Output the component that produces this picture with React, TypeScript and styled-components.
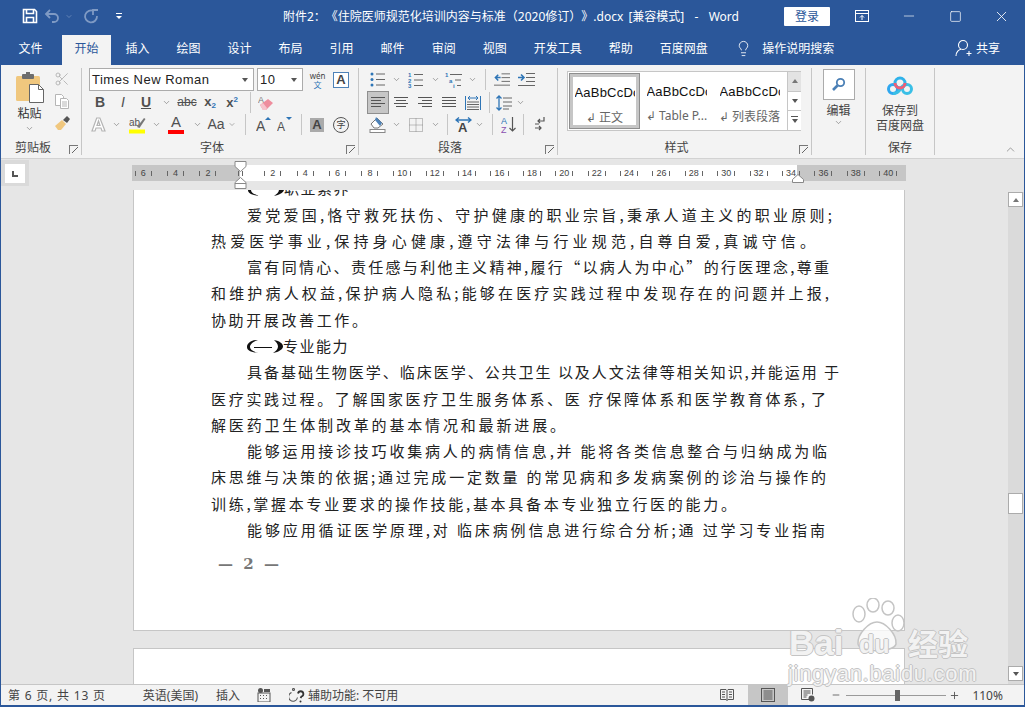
import React from "react"
import { styled, createGlobalStyle } from "styled-components"
import { Lightbulb, X, Minus, Square, ChevronDown, ChevronUp, Scissors, Plus } from "lucide-react"

const GlobalStyle = createGlobalStyle`
  html, body, #root { margin: 0; padding: 0; height: 100%; overflow: hidden; }
  body { font-family: "Noto Sans", "Noto Sans CJK SC", sans-serif; font-size: 12px; color: #444; text-spacing-trim: space-all; }
  * { box-sizing: border-box; }
`

const BLUE = "#2b579a"
const cjk = `"Noto Sans", "Noto Sans CJK SC", sans-serif`

const Window = styled.div`
  position: relative;
  height: 707px;
  width: 1025px;
  display: flex;
  flex-direction: column;
  background: ${BLUE};
  border-left: 1px solid ${BLUE};
  border-right: 1px solid ${BLUE};
  border-bottom: 2px solid ${BLUE};
  overflow: hidden;
`
const TitleBar = styled.header`
  height: 35px;
  flex: none;
  display: flex;
  align-items: center;
  padding-bottom: 3px;
  color: #fff;
  position: relative;
`
const Qat = styled.div`
  display: flex;
  align-items: center;
  padding-left: 20px;
  width: 282px;
  flex: none;
`
const QatBtn = styled.span<{ $w: number }>`
  width: ${(p) => p.$w}px;
  display: flex;
  justify-content: center;
  align-items: center;
`
const Title = styled.div`
  width: 501px;
  flex: none;
  font-size: 12px;
  color: #fff;
  white-space: pre;
  word-spacing: 2px;
`
const Login = styled.button`
  width: 46px;
  height: 19px;
  border: 0;
  background: #fff;
  color: ${BLUE};
  font: 12px ${cjk};
  padding: 0;
  margin-right: 9px;
  border-radius: 1px;
  flex: none;
`
const WinBtn = styled.span`
  width: 46.5px;
  display: flex;
  justify-content: center;
  align-items: center;
  flex: none;
`
const TabBar = styled.nav`
  height: 30px;
  flex: none;
  display: flex;
  align-items: stretch;
  padding-left: 5px;
  color: #fff;
`
const Tab = styled.span<{ $active?: boolean; $file?: boolean }>`
  padding: 0 12.5px 4px;
  margin-right: ${(p) => (p.$file ? "7px" : "2px")};
  display: flex;
  align-items: center;
  font-size: 12px;
  color: ${(p) => (p.$active ? BLUE : "#fff")};
  background: ${(p) => (p.$active ? "#f3f3f3" : "transparent")};
`
const SearchTab = styled.span`
  display: flex;
  align-items: center;
  gap: 10px;
  margin-left: 13px;
  padding-bottom: 4px;
  font-size: 12px;
`
const Share = styled.span`
  display: flex;
  align-items: center;
  gap: 2px;
  margin-left: auto;
  margin-right: 24px;
  padding-bottom: 4px;
  font-size: 12px;
`
const Ribbon = styled.section`
  height: 94px;
  flex: none;
  display: flex;
  background: #f3f3f3;
  border-bottom: 1px solid #d2d2d2;
  position: relative;
`
const Group = styled.div<{ $w: number }>`
  width: ${(p) => p.$w}px;
  flex: none;
  position: relative;
  display: flex;
  flex-direction: column;
  margin: 3px 0;
  border-right: 1px solid #c6c6c6;
  height: 87px;
`
const GroupBody = styled.div<{ $pl?: number }>`
  flex: 1;
  display: flex;
  flex-direction: column;
  gap: 1px;
  padding-left: ${(p) => p.$pl ?? 0}px;
  min-height: 0;
`
const GroupLabel = styled.div<{ $plain?: boolean }>`
  height: 14px;
  flex: none;
  text-align: center;
  padding-right: ${(p) => (p.$plain ? 0 : 16)}px;
  font-size: 12px;
  line-height: 14px;
  color: #444;
`
const Launcher = styled.span`
  position: absolute;
  right: 3px;
  bottom: 1px;
  width: 9px;
  height: 9px;
  border-left: 1px solid #777;
  border-top: 1px solid #777;
  &::after {
    content: "";
    position: absolute;
    left: 2px;
    top: 1px;
    width: 6px;
    height: 6px;
    background: linear-gradient(45deg, transparent 44%, #666 44%, #666 56%, transparent 56%);
    transform: rotate(90deg);
  }
`
const Row = styled.div<{ $h?: number }>`
  display: flex;
  align-items: center;
  height: ${(p) => p.$h ?? 21}px;
  flex: none;
`
const Cell = styled.span<{ $w: number; $on?: boolean }>`
  width: ${(p) => p.$w}px;
  height: ${(p) => (p.$on ? 23 : 21)}px;
  flex: none;
  display: flex;
  align-items: center;
  justify-content: center;
  background: ${(p) => (p.$on ? "#c6c6c6" : "transparent")};
  outline: ${(p) => (p.$on ? "1px solid #8e8e8e" : "none")};
  outline-offset: -1px;
`
const Sep = styled.span<{ $w: number }>`
  width: ${(p) => p.$w}px;
  height: 21px;
  flex: none;
  display: flex;
  justify-content: center;
  &::before {
    content: "";
    width: 1px;
    background: #c6c6c6;
  }
`
const Select = styled.div<{ $w: number }>`
  width: ${(p) => p.$w}px;
  height: 23px;
  background: #fff;
  border: 1px solid #ababab;
  display: flex;
  align-items: center;
  justify-content: space-between;
  padding: 0 5px 0 2px;
  margin-right: 3px;
  font: 13px "Liberation Sans", sans-serif;
  color: #222;
  letter-spacing: 0.5px;
  flex: none;
`
const Caret = styled.i<{ $up?: boolean }>`
  width: 0;
  height: 0;
  border-left: 3.5px solid transparent;
  border-right: 3.5px solid transparent;
  border-top: ${(p) => (p.$up ? "0" : "4px solid #555")};
  border-bottom: ${(p) => (p.$up ? "4px solid #777" : "0")};
`
const MoreCaret = styled(Caret)`
  position: relative;
  &::before {
    content: "";
    position: absolute;
    left: -3.5px;
    top: -7px;
    width: 7px;
    height: 1px;
    background: #555;
  }
`
const Glyph = styled.span<{ $size?: number; $weight?: number; $italic?: boolean; $strike?: boolean; $under?: boolean }>`
  font: ${(p) => (p.$italic ? "italic" : "normal")} ${(p) => p.$weight ?? 400} ${(p) => p.$size ?? 13}px "Liberation Sans", sans-serif;
  color: #505050;
  text-decoration: ${(p) => (p.$strike ? "line-through" : p.$under ? "underline" : "none")};
  line-height: 1.15;
  white-space: pre;
`
const Sub = styled.sub`
  font-size: 8px;
  color: #2e75b6;
  vertical-align: -2px;
`
const Sup = styled.sup`
  font-size: 8px;
  color: #2e75b6;
  vertical-align: 5px;
`
const ColorA = styled.span<{ $bar: string }>`
  display: flex;
  flex-direction: column;
  align-items: center;
  font: 15px "Liberation Sans", sans-serif;
  line-height: 14px;
  color: #505050;
  &::after {
    content: "";
    width: 16px;
    height: 4px;
    background: ${(p) => p.$bar};
    margin-top: 1px;
  }
`
const BoxA = styled.span<{ $fill?: boolean }>`
  width: ${(p) => (p.$fill ? 14 : 16)}px;
  height: ${(p) => (p.$fill ? 14 : 16)}px;
  display: flex;
  align-items: center;
  justify-content: center;
  font: 700 13px "Liberation Sans", sans-serif;
  color: #444;
  background: ${(p) => (p.$fill ? "#aaa" : "#fff")};
  border: ${(p) => (p.$fill ? "0" : "1px solid #4d82b8")};
`
const Ring = styled.span`
  width: 16px;
  height: 16px;
  border: 1px solid #555;
  border-radius: 50%;
  font-size: 9px;
  display: flex;
  align-items: center;
  justify-content: center;
  color: #444;
  line-height: 1;
`
const Wen = styled.span`
  display: flex;
  flex-direction: column;
  align-items: center;
  font-size: 8px;
  line-height: 9px;
  color: #444;
  & b {
    color: #2e75b6;
    font-weight: 400;
  }
`
const Clip = styled.div`
  flex: 1;
  display: flex;
  min-height: 0;
`
const PasteCol = styled.div`
  width: 52px;
  padding: 4px 0 0 5px;
  display: flex;
  flex-direction: column;
  align-items: center;
  font-size: 12px;
  color: #333;
`
const PasteText = styled.span`
  margin: 3px 0 2px;
  line-height: 16px;
`
const SmallCol = styled.div`
  width: 18px;
  display: flex;
  flex-direction: column;
  align-items: center;
  gap: 6px;
  padding-top: 3px;
`
const Gallery = styled.div`
  margin: 3px 0 0 9px;
  width: 234px;
  height: 60px;
  background: #fff;
  border: 1px solid #c6c6c6;
  display: flex;
`
const StyleItem = styled.div<{ $on?: boolean; $w: number }>`
  width: ${(p) => p.$w}px;
  flex: none;
  display: flex;
  flex-direction: column;
  align-items: center;
  padding-top: ${(p) => (p.$on ? "8px" : "12px")};
  border: ${(p) => (p.$on ? "4px solid #c6c6c6" : "0")};
  margin: ${(p) => (p.$on ? "1px" : "0")};
  overflow: hidden;
  outline: ${(p) => (p.$on ? "1px solid #8e8e8e" : "none")};
  outline-offset: -1px;
`
const StyleSample = styled.span`
  font: 13px "Liberation Sans", sans-serif;
  color: #111;
  letter-spacing: 0.2px;
  white-space: nowrap;
  width: 60px;
  overflow: hidden;
  height: 16px;
  line-height: 16px;
`
const StyleName = styled.span`
  margin-top: 7px;
  font-size: 12px;
  color: #666;
  white-space: nowrap;
  width: 64px;
  text-align: center;
  overflow: hidden;
`
const GalleryScroll = styled.div`
  width: 14px;
  margin-left: auto;
  flex: none;
  display: flex;
  flex-direction: column;
  border-left: 1px solid #c6c6c6;
`
const GalleryBtn = styled.span<{ $dim?: boolean; $last?: boolean }>`
  flex: 1;
  display: flex;
  align-items: center;
  justify-content: center;
  background: ${(p) => (p.$dim ? "#e3e3e3" : "#fff")};
  border-bottom: ${(p) => (p.$last ? "0" : "1px solid #c6c6c6")};
`
const EditBox = styled.div`
  width: 32px;
  height: 31px;
  margin: 1px auto 0;
  background: #fff;
  border: 1px solid #ababab;
  display: flex;
  align-items: center;
  justify-content: center;
`
const Column = styled.div<{ $pt?: number }>`
  display: flex;
  flex-direction: column;
  align-items: center;
  padding-top: ${(p) => p.$pt ?? 0}px;
  font-size: 12px;
  line-height: 15px;
  color: #444;
`
const ColumnText = styled.span<{ $mt?: number }>`
  margin-top: ${(p) => p.$mt ?? 0}px;
`
const Collapse = styled.span`
  position: absolute;
  right: 7px;
  bottom: 2px;
  color: #555;
  display: flex;
`
const Work = styled.main`
  flex: 1;
  min-height: 0;
  background: #e6e6e6;
  display: flex;
  flex-direction: column;
`
const RulerRow = styled.div`
  height: 31px;
  flex: none;
  display: flex;
  position: relative;
`
const Corner = styled.div`
  width: 28px;
  height: 26px;
  margin-top: 1px;
  background: #fff;
  border: 4px solid #dadada;
  border-bottom-width: 3px;
  display: flex;
  align-items: center;
  justify-content: center;
`
const Ruler = styled.div`
  position: absolute;
  left: 131px;
  top: 6px;
  width: 774px;
  height: 16px;
  display: flex;
  background: linear-gradient(90deg, #c6c6c6 0 108px, #fff 108px 665px, #c6c6c6 665px);
  font: 9px "Liberation Sans", sans-serif;
  color: #444;
`
const RulerCell = styled.span<{ $gap: number }>`
  width: 32.4px;
  flex: none;
  display: flex;
  align-items: center;
  justify-content: center;
  gap: ${(p) => p.$gap}px;
  &:first-child {
    margin-left: -5px;
  }
`
const Tick = styled.i`
  width: 1px;
  height: 5px;
  background: #666;
`
const Hourglass = styled.svg`
  position: absolute;
  left: 102px;
  top: -4px;
`
const RightMark = styled.svg`
  position: absolute;
  left: 660px;
  top: 9px;
`
const DocArea = styled.div`
  flex: 1;
  min-height: 0;
  display: flex;
`
const Pages = styled.div`
  flex: 1;
  min-width: 0;
  overflow: hidden;
  padding-left: 132px;
`
const Page = styled.article`
  width: 772px;
  height: 441px;
  background: #fff;
  border: 1px solid #c6c6c6;
  border-top: 0;
  overflow: hidden;
`
const NextPage = styled.div`
  width: 772px;
  height: 60px;
  margin-top: 17px;
  background: #fff;
  border: 1px solid #c6c6c6;
`
const Line = styled.div<{ $x: number; $w: number; $fit?: boolean }>`
  margin-left: ${(p) => p.$x}px;
  width: ${(p) => p.$w}px;
  height: 26.3px;
  font: 15px/26.3px "Noto Sans CJK SC", sans-serif;
  color: #222;
  text-align: ${(p) => (p.$fit ? "justify" : "left")};
  text-align-last: ${(p) => (p.$fit ? "justify" : "left")};
  text-justify: inter-character;
  white-space: ${(p) => (p.$fit ? "normal" : "nowrap")};
  overflow: hidden;
`
const HeadLine = styled(Line)`
  display: flex;
  align-items: center;
  letter-spacing: 1.5px;
`
const CutLine = styled(HeadLine)`
  margin-top: -14.5px;
  height: 26px;
`
const PageNo = styled.div`
  margin: 12px 0 0 84px;
  font: 700 15px "DejaVu Serif", serif;
  color: #777;
  word-spacing: 5px;
`
const ScrollBar = styled.aside`
  width: 16px;
  flex: none;
  margin-top: 2px;
  background: #dadada;
  display: flex;
  flex-direction: column;
`
const ScrollEnd = styled.span<{ $end?: boolean }>`
  width: 15px;
  height: 15px;
  margin-bottom: ${(p) => (p.$end ? "3px" : "0")};
  background: #fff;
  border: 1px solid #ababab;
  flex: none;
  display: flex;
  align-items: center;
  justify-content: center;
`
const ScrollTrack = styled.div`
  flex: 1;
  padding-top: 286px;
`
const ScrollThumb = styled.div`
  width: 15px;
  height: 21px;
  background: #fff;
  border: 1px solid #ababab;
`
const StatusBar = styled.footer`
  height: 21px;
  flex: none;
  background: #f3f3f3;
  border-top: 1px solid #c6c6c6;
  display: flex;
  align-items: center;
  font-size: 12px;
  color: #444;
  position: relative;
`
const StatusText = styled.span<{ $x: number; $ls?: number }>`
  margin-left: ${(p) => p.$x}px;
  letter-spacing: ${(p) => p.$ls ?? 0}px;
  white-space: pre;
  flex: none;
  display: flex;
  align-items: center;
  gap: 3px;
`
const ViewBtn = styled.span<{ $on?: boolean; $x?: number }>`
  width: 40px;
  height: 100%;
  margin-left: ${(p) => p.$x ?? 0}px;
  flex: none;
  display: flex;
  align-items: center;
  justify-content: center;
  background: ${(p) => (p.$on ? "#c6c6c6" : "transparent")};
`
const Zoom = styled.div`
  width: 100px;
  height: 1px;
  background: #9a9a9a;
  position: relative;
  flex: none;
  margin: 0 3px 0 5px;
`
const ZoomThumb = styled.i`
  position: absolute;
  left: 49px;
  top: -5px;
  width: 5px;
  height: 11px;
  background: #666;
`
const Watermark = styled.div`
  position: absolute;
  left: 786px;
  top: 596px;
  width: 190px;
  height: 95px;
  pointer-events: none;
  color: rgba(255, 255, 255, 0.8);
  text-shadow: -1px 0 #c4c4c4, 1px 0 #c4c4c4, 0 -1px #c4c4c4, 0 1px #c4c4c4;
`
const WmBrand = styled.div`
  position: absolute;
  left: 2px;
  top: 27px;
  font: 700 35px "Liberation Sans", sans-serif;
`
const WmDu = styled.div`
  position: absolute;
  left: 72px;
  top: 34px;
  font: 700 25px "Liberation Sans", sans-serif;
`
const WmJing = styled.div`
  position: absolute;
  left: 121px;
  top: 28px;
  font: 700 30px/36px "Noto Sans CJK SC", sans-serif;
`
const WmUrl = styled.div`
  position: absolute;
  left: 1px;
  top: 65px;
  font: 22px "Liberation Sans", sans-serif;
  letter-spacing: 0.7px;
`
const WmPaw = styled.svg`
  position: absolute;
  left: 64px;
  top: 2px;
`

const Chev = () => <ChevronDown size={9} color="#666" strokeWidth={1.5} />

const LinesIcon = ({ rows }: { rows: [number, number][] }) => (
  <svg width="16" height="14" viewBox="0 0 16 14">
    {rows.map(([x, w], i) => (
      <rect key={i} x={x} y={1 + i * 3} width={w} height="1" fill="#555" />
    ))}
  </svg>
)

const SaveIcon = () => (
  <svg width="16" height="16" viewBox="0 0 16 16" fill="none" stroke="#fff" strokeWidth="1.6">
    <path d="M1.5 1.5h11l2 2v11h-13z" />
    <path d="M4.5 1.5v4h7v-4M4.5 14.5v-5h7v5" />
  </svg>
)
const UndoIcon = () => (
  <svg width="16" height="14" viewBox="0 0 16 14" fill="none" stroke="#7f9ac4" strokeWidth="1.8">
    <path d="M6 1 2 5l4 4M2 5h8a4 4 0 0 1 0 8H8" />
  </svg>
)
const RedoIcon = () => (
  <svg width="16" height="16" viewBox="0 0 16 16" fill="none" stroke="#7f9ac4" strokeWidth="1.8">
    <path d="M11 3.2A6 6 0 1 0 14 8M10 7V2h5" />
  </svg>
)
const QatMenu = () => (
  <svg width="8" height="8" viewBox="0 0 8 8" fill="#fff">
    <rect x="1" y="1" width="6" height="1" />
    <path d="M1 4h6L4 7z" />
  </svg>
)
const RibbonDisplay = () => (
  <svg width="14" height="12" viewBox="0 0 14 12" fill="none" stroke="#fff">
    <rect x="0.5" y="0.5" width="13" height="11" />
    <path d="M0.5 3.5h13M7 10V5.5M5 7.5l2-2 2 2" />
  </svg>
)
const ShareIcon = () => (
  <svg width="19" height="18" viewBox="0 0 19 18" fill="none" stroke="#fff" strokeWidth="1.1">
    <circle cx="8" cy="6" r="4.500" />
    <path d="M1 17c0-4 3-6.500 5-6.800M14 12v5M11.500 14.500h5" />
  </svg>
)
const PasteIcon = () => (
  <svg width="30" height="31" viewBox="0 0 30 31">
    <rect x="1" y="4" width="24" height="25" rx="1.5" fill="#f0c77e" />
    <rect x="7" y="2" width="12" height="5" rx="1" fill="#6d6d6d" />
    <rect x="11" y="0" width="4" height="3" fill="#6d6d6d" />
    <path d="M14.500 12.500h9l5 5v13h-14z" fill="#fff" stroke="#666" />
    <path d="M23.500 12.500v5h5" fill="none" stroke="#666" />
  </svg>
)
const CopyIcon = () => (
  <svg width="16" height="16" viewBox="0 0 16 16" fill="#fff" stroke="#b5b5b5">
    <path d="M1.500 1.500h6l2 2v9h-8z" />
    <path d="M6.500 5.500h6l2 2v8h-8z" />
    <path d="M8 9h5M8 11h5M8 13h5" />
  </svg>
)
const BrushIcon = () => (
  <svg width="17" height="16" viewBox="0 0 17 16">
    <path d="M1 11 8 5l4 4-5 6H4z" fill="#f0c77e" />
    <path d="m9 5 4-4 3 3-3 4z" fill="#555" />
  </svg>
)
const EraserIcon = () => (
  <svg width="16" height="17" viewBox="0 0 16 17">
    <text x="0" y="9" fontSize="9" fontFamily="Liberation Sans" fill="#777">A</text>
    <path d="m2 11 8-6 5 4-7 7H5z" fill="#ee8d9d" />
    <path d="m2 11 3 5h3l1-2-4-5z" fill="#f6c3cc" />
  </svg>
)
const FillAIcon = () => (
  <svg width="15" height="15" viewBox="0 0 15 15" fill="#fff" stroke="#b4b4b4" strokeWidth="1.2">
    <path d="M5.700 1h3.200L14 14h-3l-1-3H5l-1 3H1zM6 8.500h3L7.500 4z" />
  </svg>
)
const HighlightIcon = () => (
  <svg width="17" height="19" viewBox="0 0 17 19">
    <text x="0" y="11" fontSize="10" fontFamily="Liberation Sans" fill="#555">ab</text>
    <path d="m8 12 7-9 1.500 1-6 9z" fill="#777" />
    <rect x="0" y="14.500" width="16" height="4" fill="#ffff00" />
  </svg>
)
const TriUp = ({ down }: { down?: boolean }) => (
  <svg width="17" height="19" viewBox="0 0 17 19">
    <text x="0" y="16" fontSize={down ? 12 : 14} fontFamily="Liberation Sans" fill="#505050">A</text>
    <path d={down ? "M9 2h6l-3 3z" : "M9 5h6l-3-3z"} fill="#2e75b6" />
  </svg>
)
const BulletIcon = () => (
  <svg width="16" height="15" viewBox="0 0 16 15">
    <circle cx="2" cy="2" r="1.500" fill="#2e75b6" />
    <circle cx="2" cy="7.500" r="1.500" fill="#2e75b6" />
    <circle cx="2" cy="13" r="1.500" fill="#2e75b6" />
    <path d="M6 2h9M6 7.500h9M6 13h9" stroke="#666" />
  </svg>
)
const NumberIcon = () => (
  <svg width="16" height="18" viewBox="0 0 16 18">
    <text x="0" y="6" fontSize="6" fontFamily="Liberation Sans" fontWeight="700" fill="#2e75b6">1</text>
    <text x="0" y="11.500" fontSize="6" fontFamily="Liberation Sans" fontWeight="700" fill="#2e75b6">2</text>
    <text x="0" y="17" fontSize="6" fontFamily="Liberation Sans" fontWeight="700" fill="#2e75b6">3</text>
    <path d="M6 3.500h9M6 9h9M6 14.500h9" stroke="#666" />
  </svg>
)
const MultiIcon = () => (
  <svg width="18" height="18" viewBox="0 0 18 18">
    <text x="0" y="6" fontSize="6" fontFamily="Liberation Sans" fontWeight="700" fill="#2e75b6">1</text>
    <text x="4" y="11.500" fontSize="6" fontFamily="Liberation Sans" fontWeight="700" fill="#2e75b6">a</text>
    <text x="8" y="17" fontSize="6" fontFamily="Liberation Sans" fontWeight="700" fill="#2e75b6">i</text>
    <path d="M5 3.500h12M10 9h6M12 14.500h4" stroke="#666" />
  </svg>
)
const IndentIcon = ({ out }: { out?: boolean }) => (
  <svg width="17" height="13" viewBox="0 0 17 13">
    <path d="M8 .5h9M8 4.500h9M8 8.500h9M0 12.500h17" stroke="#666" />
    <path d={out ? "M7 4.500H2M4.500 1.500l-3 3 3 3" : "M0 4.500h5M3 1.500l3 3-3 3"} stroke="#2e75b6" strokeWidth="1.6" fill="none" />
  </svg>
)
const DistIcon = () => (
  <svg width="16" height="16" viewBox="0 0 16 16">
    <path d="M.5 1v14M15.500 1v14" stroke="#2e75b6" />
    <path d="M3 3h10M5 1 3 3l2 2M11 1l2 2-2 2" stroke="#2e75b6" fill="none" />
    <path d="M2 7h12M2 9.500h12M2 12h12M2 14.500h12" stroke="#666" />
  </svg>
)
const SpacingIcon = () => (
  <svg width="16" height="16" viewBox="0 0 16 16">
    <path d="M3 1v14M.5 3.500 3 1l2.500 2.500M.5 12.500 3 15l2.500-2.500" stroke="#2e75b6" strokeWidth="1.300" fill="none" />
    <path d="M7 3h9M7 7h9M7 11h9M7 14h6" stroke="#666" />
  </svg>
)
const ShadeIcon = () => (
  <svg width="18" height="17" viewBox="0 0 18 17">
    <path d="m2 8 6-6 6 6-5 4H5z" fill="#fff" stroke="#777" />
    <path d="m7 1 6 6-2 3-5-6z" fill="#4d82b8" />
    <rect x="1" y="13.500" width="15" height="3" fill="#fff" stroke="#888" />
  </svg>
)
const BorderIcon = () => (
  <svg width="14" height="14" viewBox="0 0 14 14" fill="none" stroke="#888" strokeDasharray="1 1">
    <rect x="0.500" y="0.500" width="13" height="13" />
    <path d="M.5 7h13M7 .5v13" />
  </svg>
)
const LayoutIcon = () => (
  <svg width="17" height="19" viewBox="0 0 17 19">
    <text x="3" y="17" fontSize="13" fontWeight="700" fontFamily="Liberation Sans" fill="#444">A</text>
    <path d="M1 5h15M4 2.500 1 5l3 2.500M13 2.500 16 5l-3 2.500" stroke="#2e75b6" strokeWidth="1.400" fill="none" />
  </svg>
)
const SortIcon = () => (
  <svg width="16" height="21" viewBox="0 0 16 21">
    <text x="0" y="10" fontSize="9" fontFamily="Liberation Sans" fill="#2e75b6">A</text>
    <text x="0" y="19" fontSize="9" fontFamily="Liberation Sans" fill="#8a4fb0">Z</text>
    <path d="M11.500 3v14M8.500 14l3 3 3-3" stroke="#555" strokeWidth="1.200" fill="none" />
  </svg>
)
const PilcrowIcon = () => (
  <svg width="11" height="15" viewBox="0 0 11 15" fill="none" stroke="#555" strokeWidth="1.200">
    <path d="M10 0v4H4M6 2 4 4l2 2" />
    <path d="M1 11h6M5 9l2 2-2 2M1 7h4" />
  </svg>
)
const GlassIcon = () => (
  <svg width="15" height="15" viewBox="0 0 15 15" fill="none" stroke="#4a7fb5">
    <circle cx="9.500" cy="5.500" r="3.700" strokeWidth="1.800" />
    <path d="M6.500 8.500 2 13" strokeWidth="2.600" />
  </svg>
)
const NetDiskLogo = () => (
  <svg width="26" height="20" viewBox="0 0 26 20" fill="none" strokeWidth="3">
    <circle cx="6" cy="13" r="4.500" stroke="#2fa7ef" />
    <circle cx="20" cy="13" r="4.500" stroke="#39bfe6" />
    <path d="M6 17.500c5 0 6-2 7-4s3-5 7-5" stroke="#39bfe6" />
    <circle cx="13" cy="7" r="5" stroke="#2fb2ea" />
    <path d="M8 7a5 5 0 0 0 10 0" stroke="#ef5d75" />
  </svg>
)
const CornerMark = () => (
  <svg width="8" height="8" viewBox="0 0 8 8">
    <path d="M1 1h2v4h4v2H1z" fill="#555" />
  </svg>
)
const Corrupt = ({ flat }: { flat?: boolean }) => (
  <svg width="36" height="16" viewBox="0 0 36 16" fill="#111">
    <path d="M11 2C3 2 0 6 0 9s3 5 11 6C5 13 3 11 3 9s2-5 8-7z" />
    <path d="M27 2c6 1 9 4 9 6.500S32 14 26 15c3-2 5-4 5-6.500S29 4 27 2z" />
    {flat ? <path d="M7 9.500h18" stroke="#111" strokeWidth="1" /> : null}
  </svg>
)
const ReadIcon = () => (
  <svg width="14" height="14" viewBox="0 0 14 14" fill="none" stroke="#555">
    <path d="M.5 1.500H6l1 1 1-1h5.500v10H8l-1 1-1-1H.5zM7 2.500v10M2 4h3M2 6.500h3M2 9h3M9 4h3M9 6.500h3M9 9h3" />
  </svg>
)
const PrintIcon = () => (
  <svg width="14" height="14" viewBox="0 0 14 14" fill="none" stroke="#555">
    <rect x="0.500" y="0.500" width="13" height="13" />
    <path d="M2.500 3h9M2.500 5h9M2.500 7h9M2.500 9h9M2.500 11h9" />
  </svg>
)
const WebIcon = () => (
  <svg width="14" height="14" viewBox="0 0 14 14" fill="none" stroke="#555">
    <path d="M8 11.500H.5V.5h11v6M2.500 3h7M2.500 5h7M2.500 7h4M2.500 9h3" />
    <circle cx="10.500" cy="10.500" r="3" fill="#555" stroke="none" />
  </svg>
)
const MacroIcon = () => (
  <svg width="14" height="14" viewBox="0 0 14 14" fill="#555">
    <circle cx="3.500" cy="2.500" r="2.500" />
    <rect x="1" y="5" width="12" height="9" fill="none" stroke="#555" />
    <rect x="7" y="1" width="6" height="3" />
    <path d="M3 7h1v1H3zM6 7h1v1H6zM9 7h1v1H9zM3 10h1v1H3zM6 10h1v1H6zM9 10h1v1H9z" />
  </svg>
)
const AccessIcon = () => (
  <svg width="16" height="15" viewBox="0 0 16 15" fill="none" stroke="#555" strokeWidth="1.100">
    <circle cx="4.500" cy="1.500" r="1" />
    <path d="M2.500 4.500a4.500 4.500 0 1 0 6 5" />
    <path d="M9 5.500a2.700 2.700 0 1 1 3.500 3l-1 1.500" strokeWidth="1.800" stroke="#333" />
    <circle cx="11.500" cy="13.500" r="1" fill="#333" stroke="none" />
  </svg>
)

const tabs = ["插入", "绘图", "设计", "布局", "引用", "邮件", "审阅", "视图", "开发工具", "帮助", "百度网盘"]
const rulerNums = ["6", "4", "2", "", "2", "4", "6", "8", "10", "12", "14", "16", "18", "20", "22", "24", "26", "28", "30", "32", "34", "36", "38", "40"]

const body = [
  { x: 113, w: 585, t: "爱党爱国,恪守救死扶伤、守护健康的职业宗旨,秉承人道主义的职业原则;" },
  { x: 77, w: 604, t: "热爱医学事业,保持身心健康,遵守法律与行业规范,自尊自爱,真诚守信。" },
  { x: 113, w: 582, t: "富有同情心、责任感与利他主义精神,履行“以病人为中心”的行医理念,尊重" },
  { x: 77, w: 618, t: "和维护病人权益,保护病人隐私;能够在医疗实践过程中发现存在的问题并上报," },
  { x: 77, w: 156, t: "协助开展改善工作。" },
]
const body2 = [
  { x: 113, w: 592, t: "具备基础生物医学、临床医学、公共卫生 以及人文法律等相关知识,并能运用 于" },
  { x: 77, w: 615, t: "医疗实践过程。了解国家医疗卫生服务体系、医 疗保障体系和医学教育体系, 了" },
  { x: 77, w: 354, t: "解医药卫生体制改革的基本情况和最新进展。" },
  { x: 113, w: 580, t: "能够运用接诊技巧收集病人的病情信息,并 能将各类信息整合与归纳成为临" },
  { x: 77, w: 615, t: "床思维与决策的依据;通过完成一定数量 的常见病和多发病案例的诊治与操作的" },
  { x: 77, w: 525, t: "训练,掌握本专业要求的操作技能,基本具备本专业独立行医的能力。" },
  { x: 113, w: 578, t: "能够应用循证医学原理,对 临床病例信息进行综合分析;通  过学习专业指南" },
]

export default function App() {
  return (
    <>
      <GlobalStyle />
      <Window>
        <TitleBar>
          <Qat>
            <QatBtn $w={18}><SaveIcon /></QatBtn>
            <QatBtn $w={26}><UndoIcon /></QatBtn>
            <QatBtn $w={8}><ChevronDown size={9} color="#7f9ac4" /></QatBtn>
            <QatBtn $w={36}><RedoIcon /></QatBtn>
            <QatBtn $w={20}><QatMenu /></QatBtn>
          </Qat>
          <Title>附件2：《住院医师规范化培训内容与标准（2020修订）》.docx [兼容模式]  -  Word</Title>
          <Login>登录</Login>
          <WinBtn><RibbonDisplay /></WinBtn>
          <WinBtn><Minus size={16} color="#fff" strokeWidth={1} /></WinBtn>
          <WinBtn><Square size={13} color="#fff" strokeWidth={1.3} /></WinBtn>
          <WinBtn><X size={17} color="#fff" strokeWidth={1.2} /></WinBtn>
        </TitleBar>
        <TabBar>
          <Tab $file>文件</Tab>
          <Tab $active>开始</Tab>
          {tabs.map((t) => <Tab key={t}>{t}</Tab>)}
          <SearchTab><Lightbulb size={17} color="#fff" strokeWidth={1.2} />操作说明搜索</SearchTab>
          <Share><ShareIcon />共享</Share>
        </TabBar>
        <Ribbon>
          <Group $w={81}>
            <Clip>
              <PasteCol>
                <PasteIcon />
                <PasteText>粘贴</PasteText>
                <Chev />
              </PasteCol>
              <SmallCol>
                <Scissors size={16} color="#b0b0b0" strokeWidth={1.3} />
                <CopyIcon />
                <BrushIcon />
              </SmallCol>
            </Clip>
            <GroupLabel>剪贴板</GroupLabel>
            <Launcher />
          </Group>
          <Group $w={277}>
            <GroupBody $pl={7}>
              <Row $h={23}>
                <Select $w={165}>Times New Roman<Caret /></Select>
                <Select $w={46}>10<Caret /></Select>
                <Cell $w={23}><Wen>wén<b>文</b></Wen></Cell>
                <Cell $w={24}><BoxA>A</BoxA></Cell>
              </Row>
              <Row>
                <Cell $w={22}><Glyph $weight={700} $size={14}>B</Glyph></Cell>
                <Cell $w={24}><Glyph $italic $size={14}>I</Glyph></Cell>
                <Cell $w={22}><Glyph $under $weight={700} $size={14}>U</Glyph></Cell>
                <Cell $w={19}><Chev /></Cell>
                <Cell $w={22}><Glyph $strike $size={12}>abc</Glyph></Cell>
                <Cell $w={24}><Glyph $weight={700} $size={13}>x<Sub>2</Sub></Glyph></Cell>
                <Cell $w={20}><Glyph $weight={700} $size={13}>x<Sup>2</Sup></Glyph></Cell>
                <Sep $w={16} />
                <Cell $w={16}><EraserIcon /></Cell>
              </Row>
              <Row>
                <Cell $w={19}><FillAIcon /></Cell>
                <Cell $w={16}><Chev /></Cell>
                <Cell $w={26}><HighlightIcon /></Cell>
                <Cell $w={12}><Chev /></Cell>
                <Cell $w={28}><ColorA $bar="#f00">A</ColorA></Cell>
                <Cell $w={14}><Chev /></Cell>
                <Cell $w={24}><Glyph $size={14}>Aa</Glyph></Cell>
                <Cell $w={8}><Chev /></Cell>
                <Sep $w={18} />
                <Cell $w={20}><TriUp /></Cell>
                <Cell $w={22}><TriUp down /></Cell>
                <Sep $w={10} />
                <Cell $w={22}><BoxA $fill>A</BoxA></Cell>
                <Cell $w={26}><Ring>字</Ring></Cell>
              </Row>
            </GroupBody>
            <GroupLabel>字体</GroupLabel>
            <Launcher />
          </Group>
          <Group $w={199}>
            <GroupBody $pl={8}>
              <Row $h={23}>
                <Cell $w={22}><BulletIcon /></Cell>
                <Cell $w={14}><Chev /></Cell>
                <Cell $w={26}><NumberIcon /></Cell>
                <Cell $w={12}><Chev /></Cell>
                <Cell $w={26}><MultiIcon /></Cell>
                <Cell $w={10}><Chev /></Cell>
                <Sep $w={17} />
                <Cell $w={16}><IndentIcon out /></Cell>
                <Cell $w={32}><IndentIcon /></Cell>
              </Row>
              <Row>
                <Cell $w={22} $on><LinesIcon rows={[[1, 14], [1, 10], [1, 14], [1, 10]]} /></Cell>
                <Cell $w={24}><LinesIcon rows={[[1, 14], [3, 10], [1, 14], [3, 10]]} /></Cell>
                <Cell $w={24}><LinesIcon rows={[[1, 14], [5, 10], [1, 14], [5, 10]]} /></Cell>
                <Cell $w={24}><LinesIcon rows={[[1, 14], [1, 14], [1, 14], [1, 14]]} /></Cell>
                <Cell $w={24}><DistIcon /></Cell>
                <Sep $w={8} />
                <Cell $w={22}><SpacingIcon /></Cell>
                <Cell $w={10}><Chev /></Cell>
              </Row>
              <Row>
                <Cell $w={22}><ShadeIcon /></Cell>
                <Cell $w={14}><Chev /></Cell>
                <Cell $w={26}><BorderIcon /></Cell>
                <Cell $w={12}><Chev /></Cell>
                <Sep $w={13} />
                <Cell $w={18}><LayoutIcon /></Cell>
                <Cell $w={14}><Chev /></Cell>
                <Sep $w={13} />
                <Cell $w={20}><SortIcon /></Cell>
                <Sep $w={8} />
                <Cell $w={24}><PilcrowIcon /></Cell>
              </Row>
            </GroupBody>
            <GroupLabel>段落</GroupLabel>
            <Launcher />
          </Group>
          <Group $w={254}>
            <GroupBody>
              <Gallery>
                <StyleItem $on $w={71}>
                  <StyleSample>AaBbCcDc</StyleSample>
                  <StyleName>↲ 正文</StyleName>
                </StyleItem>
                <StyleItem $w={71}>
                  <StyleSample>AaBbCcDc</StyleSample>
                  <StyleName>↲ Table P...</StyleName>
                </StyleItem>
                <StyleItem $w={75}>
                  <StyleSample>AaBbCcDc</StyleSample>
                  <StyleName>↲ 列表段落</StyleName>
                </StyleItem>
                <GalleryScroll>
                  <GalleryBtn $dim><Caret $up /></GalleryBtn>
                  <GalleryBtn><Caret /></GalleryBtn>
                  <GalleryBtn $last><MoreCaret /></GalleryBtn>
                </GalleryScroll>
              </Gallery>
            </GroupBody>
            <GroupLabel>样式</GroupLabel>
            <Launcher />
          </Group>
          <Group $w={54}>
            <GroupBody>
              <Column>
                <EditBox><GlassIcon /></EditBox>
                <ColumnText $mt={3}>编辑</ColumnText>
                <Chev />
              </Column>
            </GroupBody>
          </Group>
          <Group $w={69}>
            <GroupBody>
              <Column $pt={8}>
                <NetDiskLogo />
                <ColumnText $mt={7}>保存到</ColumnText>
                <ColumnText>百度网盘</ColumnText>
              </Column>
            </GroupBody>
            <GroupLabel $plain>保存</GroupLabel>
          </Group>
          <Collapse><ChevronUp size={13} strokeWidth={1} /></Collapse>
        </Ribbon>
        <Work>
          <RulerRow>
            <Corner><CornerMark /></Corner>
            <Ruler>
              {rulerNums.map((n, i) => (
                <RulerCell key={i} $gap={n.length === 1 ? 5 : 3}><Tick />{n}<Tick /></RulerCell>
              ))}
              <Hourglass width="13" height="28" viewBox="0 0 13 28" fill="#fff" stroke="#888">
                <path d="M1 .5h11v5l-5.500 5-5.500-5zM1 21.500l5.500-5 5.500 5v6H1z" />
                <path d="M1 22.500h11" />
              </Hourglass>
              <RightMark width="12" height="9" viewBox="0 0 12 9" fill="#fff" stroke="#888">
                <path d="M.5 8.500v-3l5.500-5 5.500 5v3z" />
              </RightMark>
            </Ruler>
          </RulerRow>
          <DocArea>
            <Pages>
              <Page>
                <CutLine $x={114} $w={300}><Corrupt />职业素养</CutLine>
                {body.map((l) => <Line key={l.t} $x={l.x} $w={l.w} $fit>{l.t}</Line>)}
                <HeadLine $x={113} $w={200}><Corrupt flat />专业能力</HeadLine>
                {body2.map((l) => <Line key={l.t} $x={l.x} $w={l.w} $fit>{l.t}</Line>)}
                <PageNo>— 2 —</PageNo>
              </Page>
              <NextPage />
            </Pages>
            <ScrollBar>
              <ScrollEnd><Caret $up /></ScrollEnd>
              <ScrollTrack><ScrollThumb /></ScrollTrack>
              <ScrollEnd $end><Caret /></ScrollEnd>
            </ScrollBar>
          </DocArea>
        </Work>
        <StatusBar>
          <StatusText $x={7} $ls={0.8}>第 6 页, 共 13 页</StatusText>
          <StatusText $x={37}>英语(美国)</StatusText>
          <StatusText $x={18}>插入</StatusText>
          <StatusText $x={17}><MacroIcon /></StatusText>
          <StatusText $x={18}><AccessIcon />辅助功能: 不可用</StatusText>
          <StatusText $x={322}><ReadIcon /></StatusText>
          <ViewBtn $on $x={14}><PrintIcon /></ViewBtn>
          <ViewBtn><WebIcon /></ViewBtn>
          <StatusText $x={3}><Minus size={10} color="#555" /></StatusText>
          <Zoom><ZoomThumb /></Zoom>
          <Plus size={11} color="#555" />
          <StatusText $x={12}>110%</StatusText>
        </StatusBar>
        <Watermark>
          <WmPaw width="56" height="58" viewBox="0 0 56 58" fill="rgba(255,255,255,.75)" stroke="#c4c4c4" strokeWidth="1.5">
            <ellipse cx="8" cy="16" rx="6" ry="8" />
            <ellipse cx="22" cy="7" rx="6" ry="7" />
            <ellipse cx="37" cy="10" rx="6" ry="7" />
            <ellipse cx="47" cy="25" rx="6" ry="8" />
            <path d="M26 24c-8 0-20 12-19 22 1 9 36 9 38 0 1-10-11-22-19-22z" />
          </WmPaw>
          <WmBrand>Bai</WmBrand>
          <WmDu>du</WmDu>
          <WmJing>经验</WmJing>
          <WmUrl>jingyan.baidu.com</WmUrl>
        </Watermark>
      </Window>
    </>
  )
}
